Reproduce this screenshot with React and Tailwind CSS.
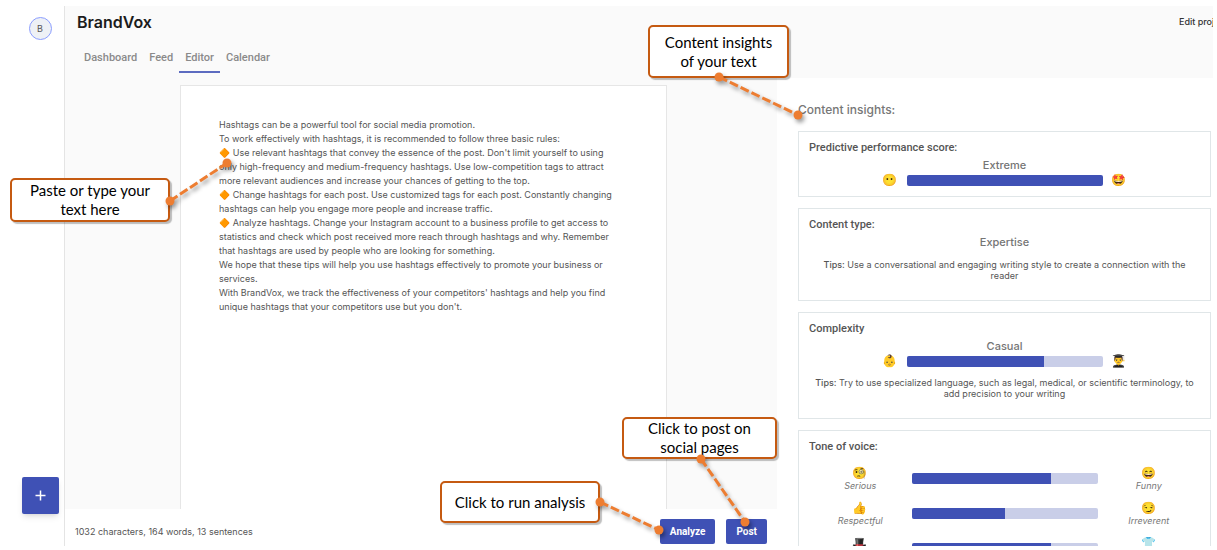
import React, { useState } from "react";

const TABS = ["Dashboard", "Feed", "Editor", "Calendar"];

const SAMPLE_TEXT = `Hashtags can be a powerful tool for social media promotion.
To work effectively with hashtags, it is recommended to follow three basic rules:
🔶 Use relevant hashtags that convey the essence of the post. Don't limit yourself to using only high-frequency and medium-frequency hashtags. Use low-competition tags to attract more relevant audiences and increase your chances of getting to the top.
🔶 Change hashtags for each post. Use customized tags for each post. Constantly changing hashtags can help you engage more people and increase traffic.
🔶 Analyze hashtags. Change your Instagram account to a business profile to get access to statistics and check which post received more reach through hashtags and why. Remember that hashtags are used by people who are looking for something.
We hope that these tips will help you use hashtags effectively to promote your business or services.
With BrandVox, we track the effectiveness of your competitors' hashtags and help you find unique hashtags that your competitors use but you don't.`;

const TONES = [
  { left: ["🧐", "Serious"], right: ["😄", "Funny"], value: 75 },
  { left: ["👍", "Respectful"], right: ["😏", "Irreverent"], value: 50 },
  { left: ["🎩", ""], right: ["👕", ""], value: 75 },
];

const CONNECTORS = [
  [719, 77, 798, 115],
  [170, 201, 227, 163],
  [600, 502, 659, 530],
  [701, 459, 745, 522],
];

const Emoji = ({ children }) => (
  <span className="font-['Noto_Color_Emoji',sans-serif] text-[12px] leading-[14px]">
    {children}
  </span>
);

const Meter = ({ value, label }) => (
  <div
    role="meter"
    aria-label={label}
    aria-valuenow={value}
    aria-valuemin={0}
    aria-valuemax={100}
    className="h-[11px] w-full overflow-hidden rounded-[2px] bg-[#c9cee8]">
    <div className="h-full bg-[#3f51b5]" style={{ width: `${value}%` }} />
  </div>
);

const Card = ({ title, children, className = "" }) => (
  <section
    className={`shrink-0 border border-[#e0e6e8] px-2.5 pt-[9px] ${className}`}>
    <h3 className="font-[Roboto,sans-serif] text-[11px] leading-[14px] font-medium text-[#555]">
      {title}
    </h3>
    {children}
  </section>
);

const Result = ({ children }) => (
  <p className="text-center text-[11px] leading-[14px] font-medium text-[#757575]">
    {children}
  </p>
);

const Scale = ({ from, to, value, label }) => (
  <div className="flex h-4 items-center justify-center gap-[9px]">
    <Emoji>{from}</Emoji>
    <div className="w-[196px]">
      <Meter value={value} label={label} />
    </div>
    <Emoji>{to}</Emoji>
  </div>
);

const Tips = ({ children }) => (
  <p className="text-center text-[9px] leading-[11px] text-[#555]">
    <span className="font-medium">Tips:</span> {children}
  </p>
);

const ToneEnd = ({ emoji, name }) => (
  <div className="flex h-[25px] flex-col items-center">
    <Emoji>{emoji}</Emoji>
    {name && (
      <span className="text-[9px] leading-[11px] text-[#777] italic">
        {name}
      </span>
    )}
  </div>
);

const Callout = ({ children, className }) => (
  <div
    className={`absolute flex items-center justify-center rounded-[5px] border-2 border-[#c55a11] bg-white text-center font-[Lato,sans-serif] text-[15px] leading-[19px] text-black shadow-[2px_2px_1px_rgba(0,0,0,0.25)] ${className}`}>
    {children}
  </div>
);

const Connectors = () => (
  <svg
    className="pointer-events-none absolute top-0 left-0 drop-shadow-[2px_3px_2px_rgba(0,0,0,0.4)]"
    width="820"
    height="550"
    fill="none"
    aria-hidden="true">
    {CONNECTORS.map(([x1, y1, x2, y2]) => (
      <g key={x1}>
        <line
          x1={x1}
          y1={y1}
          x2={x2}
          y2={y2}
          stroke="#ed7d31"
          strokeWidth="3"
          strokeDasharray="9 3"
        />
        <circle cx={x1} cy={y1} r="4.5" fill="#ed7d31" />
        <circle cx={x2} cy={y2} r="4.5" fill="#ed7d31" />
      </g>
    ))}
  </svg>
);

const Sidebar = () => (
  <aside className="flex w-[65px] shrink-0 flex-col items-center justify-between border-r border-[#e4e4e4] pt-[11px] pb-8 pl-4">
    <button
      type="button"
      className="h-[23px] w-[23px] rounded-full border border-[#8c9eff] bg-[#eef1f6] text-[9px] text-[#555]">
      B
    </button>
    <button
      type="button"
      aria-label="New post"
      className="flex h-[37px] w-[37px] items-center justify-center rounded-[2px] bg-[#3f51b5] shadow-md">
      <svg width="11" height="11" viewBox="0 0 11 11" aria-hidden="true">
        <path d="M5.5 0.5v10M0.5 5.5h10" stroke="#fff" strokeWidth="1.5" />
      </svg>
    </button>
  </aside>
);

const Header = ({ tab, onTabChange }) => (
  <header className="h-[72px] shrink-0 bg-[#fafafa] pl-3">
    <div className="flex h-8 items-center justify-between">
      <h1 className="text-[16px] leading-5 font-semibold text-[#1c1c1c]">
        BrandVox
      </h1>
      <a
        href="#edit"
        className="w-[34px] text-[9px] font-medium whitespace-nowrap text-[#333]">
        Edit project
      </a>
    </div>
    <nav className="flex pt-1.5 pl-px">
      {TABS.map((name) => (
        <button
          key={name}
          type="button"
          onClick={() => onTabChange(name)}
          className={`h-[29px] border-b-2 px-1.5 pt-0.5 font-[Roboto,sans-serif] text-[11px] font-medium text-[#8a8a8a] ${
            tab === name ? "border-[#5c6bc0]" : "border-transparent"
          }`}>
          {name}
        </button>
      ))}
    </nav>
  </header>
);

const Editor = () => {
  const [text, setText] = useState(SAMPLE_TEXT);

  return (
    <main className="flex min-w-0 flex-1 flex-col">
      <div className="flex flex-1 bg-[#fafafa] pt-[7px] pr-[110px] pl-[115px]">
        <textarea
          aria-label="Post text"
          value={text}
          onChange={(e) => setText(e.target.value)}
          spellCheck={false}
          className="w-full resize-none overflow-hidden border border-b-0 border-[#e6e6e6] bg-white pt-8 pr-12 pl-[38px] font-[Inter,'Noto_Color_Emoji',sans-serif] text-[9px] leading-[14px] text-[#555] outline-none"
        />
      </div>
      <footer className="flex h-[37px] shrink-0 items-center justify-between pt-2 pr-2.5 pl-2.5">
        <p className="text-[9px] text-[#555]">
          1032 characters, 164 words, 13 sentences
        </p>
        <div className="flex gap-[11px] font-[Roboto,sans-serif] text-[10px] font-bold text-white">
          <button
            type="button"
            className="h-[25px] rounded-[2px] bg-[#3f51b5] px-2.5">
            Analyze
          </button>
          <button
            type="button"
            className="h-[25px] rounded-[2px] bg-[#3f51b5] px-2.5">
            Post
          </button>
        </div>
      </footer>
    </main>
  );
};

const Insights = () => (
  <aside className="flex w-[436px] shrink-0 flex-col gap-[11px] overflow-hidden bg-white pt-[25px] pr-0.5 pl-[21px]">
    <h2 className="mb-[3px] text-[12px] leading-[14px] font-medium text-[#777]">
      Content insights:
    </h2>
    <Card title="Predictive performance score:" className="pb-2">
      <div className="pt-[3px]">
        <Result>Extreme</Result>
        <Scale from="😶" to="🤩" value={100} label="Predictive performance" />
      </div>
    </Card>
    <Card title="Content type:" className="pb-[19px]">
      <div className="pt-[3px]">
        <Result>Expertise</Result>
        <div className="pt-2.5">
          <Tips>
            Use a conversational and engaging writing style to create a
            connection with the reader
          </Tips>
        </div>
      </div>
    </Card>
    <Card title="Complexity" className="pb-[19px]">
      <div className="pt-[3px]">
        <Result>Casual</Result>
        <Scale from="👶" to="👨‍🎓" value={70} label="Complexity" />
        <div className="pt-2">
          <Tips>
            Try to use specialized language, such as legal, medical, or
            scientific terminology, to add precision to your writing
          </Tips>
        </div>
      </div>
    </Card>
    <Card title="Tone of voice:">
      <div className="flex flex-col gap-2.5 pt-3">
        {TONES.map(({ left, right, value }) => (
          <div
            key={left[0]}
            className="grid grid-cols-[1fr_186px_1fr] items-center">
            <ToneEnd emoji={left[0]} name={left[1]} />
            <Meter value={value} label={`${left[0]} to ${right[0]}`} />
            <ToneEnd emoji={right[0]} name={right[1]} />
          </div>
        ))}
      </div>
    </Card>
  </aside>
);

const App = () => {
  const [tab, setTab] = useState("Editor");

  return (
    <div className="relative h-screen overflow-hidden bg-white pt-1.5 pr-1 pb-1 font-[Inter,sans-serif]">
      <div className="flex h-full overflow-hidden">
        <Sidebar />
        <div className="flex min-w-0 flex-1 flex-col">
          <Header tab={tab} onTabChange={setTab} />
          <div className="flex min-h-0 flex-1">
            <Editor />
            <Insights />
          </div>
        </div>
      </div>

      <Callout className="top-[25px] left-[648px] h-[53px] w-[141px]">
        Content insights
        <br />
        of your text
      </Callout>
      <Callout className="top-[178px] left-[10px] h-11 w-40">
        Paste or type your
        <br />
        text here
      </Callout>
      <Callout className="top-[417px] left-[622px] h-[42px] w-[155px]">
        Click to post on
        <br />
        social pages
      </Callout>
      <Callout className="top-[481px] left-[440px] h-[42px] w-40">
        Click to run analysis
      </Callout>
      <Connectors />
    </div>
  );
};

export default App;
